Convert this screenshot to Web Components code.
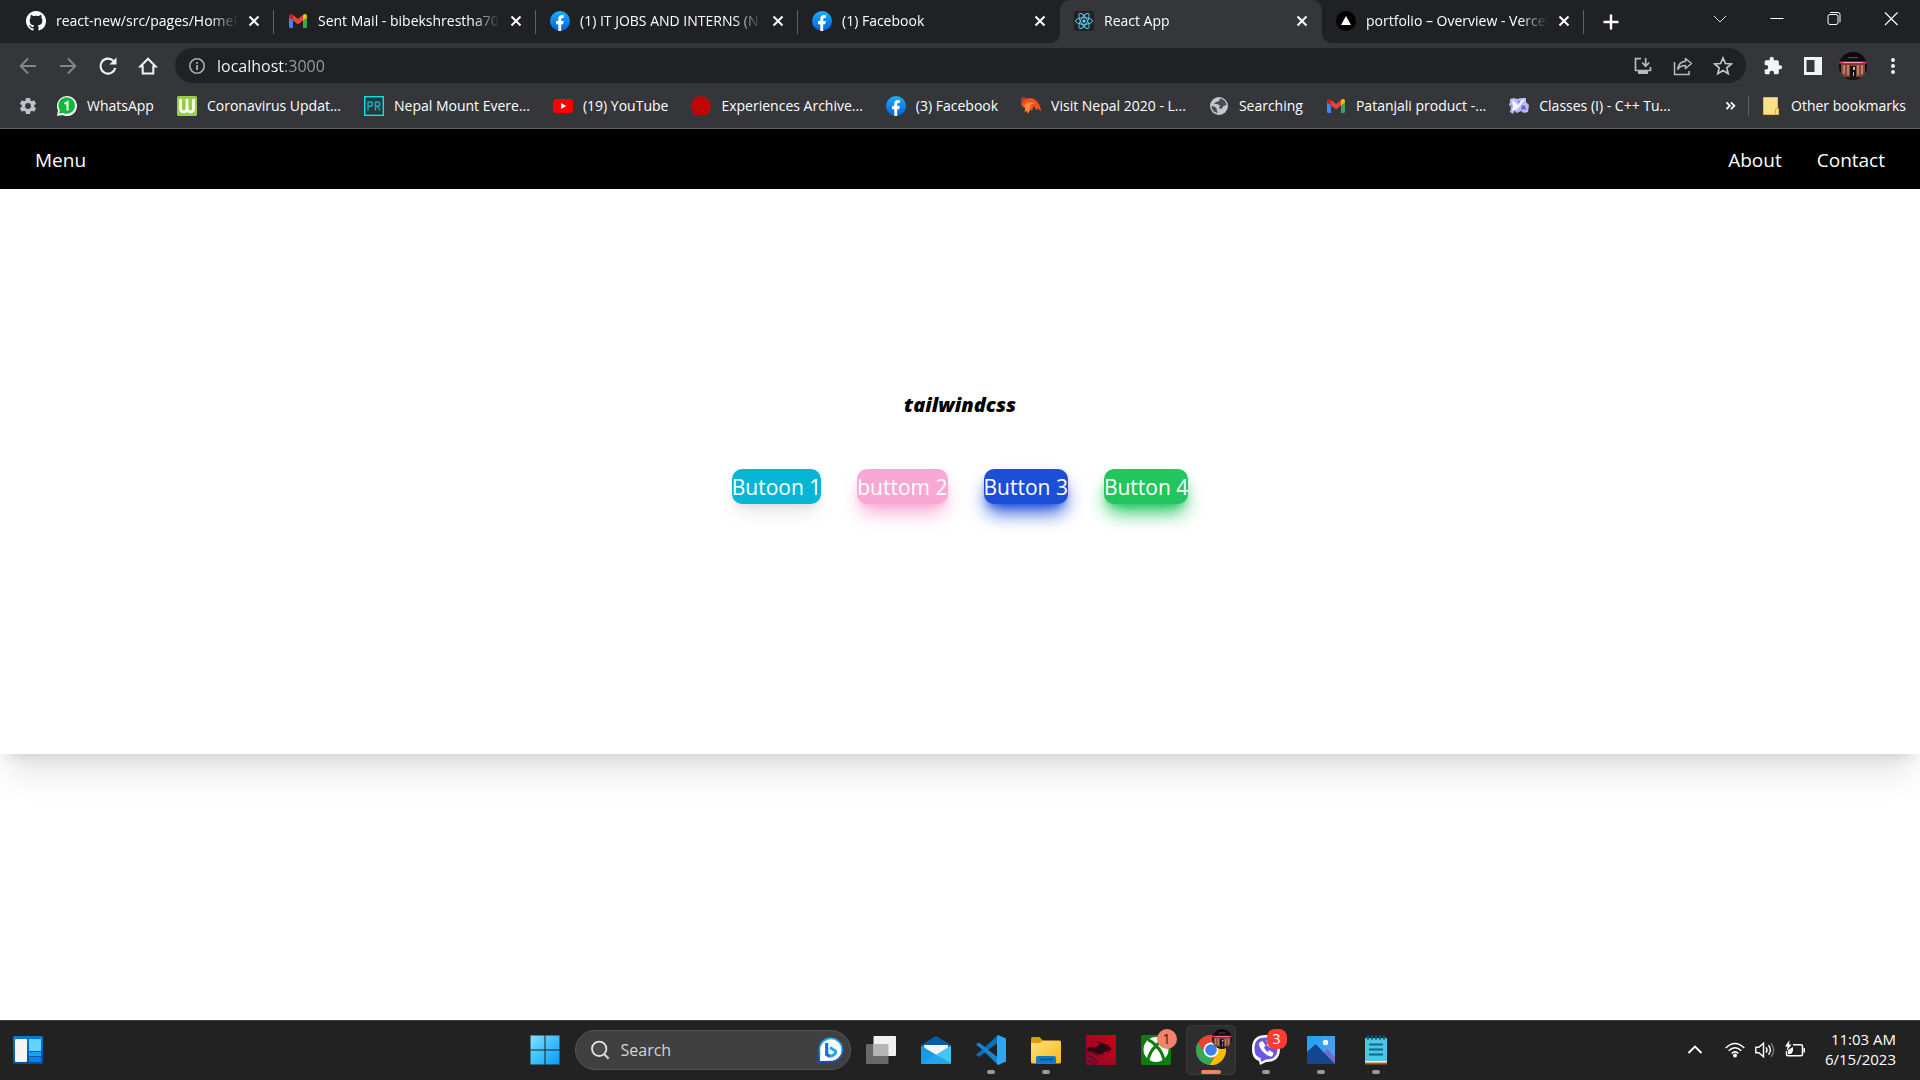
<!DOCTYPE html>
<html lang="en">
<head>
<meta charset="utf-8">
<title>React App</title>
<style>
  html, body { height: 100%; }
  body { margin: 0; font-family: "Open Sans", "Noto Sans", sans-serif; background: #fff; overflow: hidden; }
</style>
</head>
<body>
<desktop-screen></desktop-screen>
<script>
const ICONS = {
  github: ['0 0 16 16', '<path fill="#fff" d="M8 0C3.58 0 0 3.58 0 8c0 3.54 2.29 6.53 5.47 7.59.4.07.55-.17.55-.38 0-.19-.01-.82-.01-1.49-2.01.37-2.53-.49-2.69-.94-.09-.23-.48-.94-.82-1.13-.28-.15-.68-.52-.01-.53.63-.01 1.08.58 1.23.82.72 1.21 1.87.87 2.33.66.07-.52.28-.87.51-1.07-1.78-.2-3.64-.89-3.64-3.95 0-.87.31-1.59.82-2.15-.08-.2-.36-1.02.08-2.12 0 0 .67-.21 2.2.82.64-.18 1.32-.27 2-.27s1.36.09 2 .27c1.53-1.04 2.2-.82 2.2-.82.44 1.1.16 1.92.08 2.12.51.56.82 1.27.82 2.15 0 3.07-1.87 3.75-3.65 3.95.29.25.54.73.54 1.48 0 1.07-.01 1.93-.01 2.2 0 .21.15.46.55.38A8.01 8.01 0 0 0 16 8c0-4.42-3.58-8-8-8z"/>'],
  gmail: ['0 0 20 20', '<path fill="#4285f4" d="M1 6v9.500a1.500 1.500 0 0 0 1.500 1.500H5V9z"/><path fill="#34a853" d="M19 6v9.500a1.500 1.500 0 0 1-1.500 1.500H15V9z"/><path fill="#ea4335" d="M5 9.500V4l5 4 5-4v5.500l-5 4z"/><path fill="#c5221f" d="M1 5c0-2 2-2.600 3.300-1.600L5 4v5.500L1 6.500z"/><path fill="#fbbc04" d="M19 5c0-2-2-2.600-3.300-1.600L15 4v5.500l4-3z"/>'],
  facebook: ['0 0 20 20', '<defs><linearGradient id="f" x2="0" y2="1"><stop stop-color="#19afff"/><stop offset="1" stop-color="#0062e0"/></linearGradient></defs><circle cx="10" cy="10" r="10" fill="url(#f)"/><path fill="#fff" d="M8.300 20v-6.800H6V10h2.300V8c0-2.700 1.300-4 3.800-4 .7 0 1.300.1 1.700.2V7h-1.300c-1 0-1.300.5-1.300 1.300V10h2.500l-.5 3.200h-2V20z"/>'],
  react: ['0 0 20 20', '<rect width="20" height="20" rx="2" fill="#20232a"/><g fill="none" stroke="#61dafb" stroke-width=".9"><ellipse cx="10" cy="10" rx="8.500" ry="3.300"/><ellipse cx="10" cy="10" rx="8.500" ry="3.300" transform="rotate(60 10 10)"/><ellipse cx="10" cy="10" rx="8.500" ry="3.300" transform="rotate(120 10 10)"/></g><circle cx="10" cy="10" r="1.600" fill="#61dafb"/>'],
  vercel: ['0 0 20 20', '<circle cx="10" cy="10" r="10" fill="#000"/><path fill="#fff" d="M10 5l5 9H5z"/>'],
  close: ['0 0 20 20', '<path d="M5.500 5.500l9 9m0-9l-9 9" stroke="#fff" stroke-width="2"/>'],
  plus: ['0 0 20 20', '<path d="M10 2.500v15M2.500 10h15" stroke="#fff" stroke-width="2.400"/>'],
  caret: ['0 0 20 20', '<path d="M4 7l6 6 6-6" fill="none" stroke="#ddd" stroke-width="1"/>'],
  minimize: ['0 0 20 20', '<path d="M3.500 9.500h13" stroke="#fff" stroke-width="1"/>'],
  restore: ['0 0 20 20', '<rect x="4" y="5.500" width="10" height="10" rx="2" fill="none" stroke="#fff"/><path d="M6 3.500h8a2 2 0 0 1 2 2v8" fill="none" stroke="#fff"/>'],
  exit: ['0 0 20 20', '<path d="M4 3.500l12.500 12.500m0-12.500L4 16" stroke="#fff" stroke-width="1.100"/>'],
  back: ['0 0 20 20', '<path d="M18 10H3m7-7.500L2.700 10l7.300 7.500" fill="none" stroke="#85878a" stroke-width="1.800"/>'],
  forward: ['0 0 20 20', '<path d="M2 10h15M10 2.500l7.300 7.500-7.300 7.500" fill="none" stroke="#85878a" stroke-width="1.800"/>'],
  reload: ['0 0 20 20', '<path d="M15.500 5A7.500 7.500 0 1 0 17.300 12" fill="none" stroke="#f1f3f4" stroke-width="2.100"/><path d="M18.500 1.500v7h-7z" fill="#f1f3f4"/>'],
  home: ['0 0 20 20', '<path d="M2.300 10.500L10 2.700l7.700 7.800H15.300v7H4.700v-7z" fill="none" stroke="#f1f3f4" stroke-width="2"/>'],
  info: ['0 0 20 20', '<circle cx="10" cy="10" r="7.200" fill="none" stroke="#a8abaf" stroke-width="1.600"/><path d="M10 9v5M10 6v1.800" stroke="#a8abaf" stroke-width="1.800"/>'],
  install: ['0 0 20 20', '<path d="M8 2.700H2.500v11.800h15V11" fill="none" stroke="#b8babd" stroke-width="1.700"/><path d="M12.700 2v8m-3.500-3.500l3.500 3.700 3.600-3.700" stroke="#b8babd" stroke-width="1.700" fill="none"/><path fill="#b8babd" d="M5 15h10v3H5z"/>'],
  share: ['0 0 20 20', '<path d="M1.500 6v12.500H16V15" fill="none" stroke="#b8babd" stroke-width="1.500"/><path d="M12.500 2.500l6 5-6 5V9.500c-3.500 0-6 1-7.700 3.800.3-4 3-7.500 7.700-8z" fill="none" stroke="#b8babd" stroke-width="1.500" stroke-linejoin="round"/>'],
  star: ['0 0 20 20', '<path d="M10 2l2.400 5.500 5.900.5-4.500 3.900 1.400 5.800L10 14.600l-5.200 3.100 1.400-5.800L1.700 8l5.900-.5z" fill="none" stroke="#c2c4c7" stroke-width="1.700"/>'],
  puzzle: ['0 0 24 24', '<path fill="#f1f3f4" d="M20.500 11H19V7a2 2 0 0 0-2-2h-4V3.500a2.500 2.500 0 0 0-5 0V5H4a2 2 0 0 0-2 2v3.800h1.500a2.700 2.700 0 0 1 0 5.400H2V20a2 2 0 0 0 2 2h3.800v-1.500a2.700 2.700 0 0 1 5.400 0V22H17a2 2 0 0 0 2-2v-4h1.500a2.500 2.500 0 0 0 0-5z"/>'],
  panel: ['0 0 20 20', '<path fill="#f1f3f4" fill-rule="evenodd" d="M1 1h18v18H1zM3.500 4v12h8V4z"/>'],
  dots: ['0 0 20 20', '<g fill="#f1f3f4"><circle cx="10" cy="4" r="2"/><circle cx="10" cy="10" r="2"/><circle cx="10" cy="16" r="2"/></g>'],
  avatar: ['0 0 28 28', '<defs><clipPath id="c"><circle cx="14" cy="14" r="14"/></clipPath></defs><g clip-path="url(#c)"><path fill="#0c0a12" d="M0 0h28v28H0z"/><path fill="#7c4a38" d="M2 12h24v14H2z"/><path fill="#b9806a" d="M4 13h2v9H4zM8 13h2v10H8zM18 13h2v10h-2zM22 13h2v9h-2z"/><path fill="#14100f" d="M11 14h6v11h-6z"/><path fill="#b8bcc0" d="M14 15h2v3h-2zM14 20h1v4h-1z"/><path fill="#a0142e" d="M2 11h24v1.500H2z"/><path fill="#f0285c" d="M0 9.500h28v2H0z"/><path fill="#ffc0d0" d="M4 10h20v.8H4z"/><path fill="#63423c" d="M9 5h10v1.200H9z"/><path fill="#201512" d="M0 25h28v3H0z"/></g>'],
  gear: ['0 0 24 24', '<path fill="#bdc1c6" fill-rule="evenodd" d="M19.400 13a7.500 7.500 0 0 0 0-2l2.300-1.800-2.300-4-2.700 1.100a8 8 0 0 0-1.800-1L14.500 2.500h-5L9.100 5.300a8 8 0 0 0-1.800 1L4.600 5.200l-2.300 4L4.600 11a7.500 7.500 0 0 0 0 2l-2.300 1.800 2.300 4 2.700-1.100c.6.400 1.200.8 1.800 1l.4 2.800h5l.4-2.800c.6-.2 1.200-.6 1.800-1l2.700 1.100 2.300-4zM12 15.500a3.500 3.500 0 1 1 0-7 3.500 3.500 0 0 1 0 7z"/>'],
  whatsapp: ['0 0 20 20', '<path fill="#fff" d="M0 20l1-5.500A10 10 0 1 1 5.500 19z"/><path fill="#12b83c" d="M2 17.800l.8-3.600A8.300 8.300 0 1 1 6 17z"/><path d="M7.500 7.800L10.500 6v8.500" fill="none" stroke="#fff" stroke-width="2"/>'],
  worldometer: ['0 0 20 20', '<rect width="20" height="20" rx="1.500" fill="#99cf45"/><path d="M3.500 3v9.500q0 3.300 3.200 3.300t3.300-3.300V3v9.500q0 3.300 3.300 3.300t3.200-3.300V3" fill="none" stroke="#fff" stroke-width="2.700"/>'],
  pr: ['0 0 20 20', '<rect x=".7" y=".7" width="18.600" height="18.600" fill="#26383c" stroke="#00e5e8" stroke-width="1.400"/><path d="M4 14.500V6H6.500a2 2 0 0 1 0 4.200H4M11.500 14.500V6h2.200a2 2 0 0 1 0 4.200h-2.200m2.200 0l2.300 4.300" fill="none" stroke="#12b8bd" stroke-width="1.400"/>'],
  youtube: ['0 0 20 20', '<rect y="3" width="20" height="14" rx="3.500" fill="#f00"/><path fill="#fff" d="M8 7l5.200 3L8 13z"/>'],
  blob: ['0 0 20 20', '<path fill="#c00508" d="M5 1.500C8-.5 13-.3 16 2.500s4 6 3.500 9.500c-.3 3-1 4-2 5.500l-.5 2-2-1-1.500 1.200-2-1-2 1-1.800-.8L6 19.800l-1.500-1L2 19l.3-2.500C.5 14 0 11 .5 8s2-5 4.500-6.500z"/>'],
  bird: ['0 0 20 20', '<path fill="#f0541c" d="M0 8C2 3.500 7 1.500 11 2.500c5 1 8.500 6 9 13l-3-3-1.500 1.500-3-4-1.500 5-1.500-2-2.500 5-1.500-3-2 2 .5-5-2-1z"/><path fill="#c23a1a" d="M0 1l1.500 1L3 .5l1 1.500 2-1-3 4-3 3z"/><path fill="#ff8a2c" d="M2.500 10c3-4 8-5 12-2-3-.5-5 .5-5 2l-.5 4-2 3-1.500-3-1.500 1v-4z"/>'],
  globe: ['0 0 20 20', '<circle cx="10" cy="10" r="9" fill="#c3c6ca"/><path fill="#4a4d51" d="M11 2.500c3.500.4 6 3 6.500 6.500l-3 1-2 3-2.500-1 1-2.500-3-1.500H5l2-2 3-1zM2.500 10l3 .5 2 2 1 4.500c-3.500-.7-6-3.500-6-7z"/>'],
  classes: ['0 0 20 20', '<path fill="#b9b9f2" d="M1 3l4-1 3 1 4-1 5 0v4l3 3-1 7-4 1-3-2-4 2-3-2-1 3-3-2 1-4-2-3 1-3z"/><path fill="#f4f4ff" d="M3 4l3 2 3 3 4-5 3-1-4 6-5 5-4 1 1-4z"/><path fill="#6464c8" d="M9 4l2 2-2 1zM1 9l3 1-3 1zM13 9l3 1 1 4-3-1-2 2zM5 14l2 1-2 2z"/>'],
  more: ['0 0 20 20', '<path d="M6.500 6.300l3.300 3.400-3.300 3.400m4.500-6.800l3.300 3.400-3.300 3.400" fill="none" stroke="#fff" stroke-width="1.800"/>'],
  folder: ['0 0 20 20', '<path fill="#ffe08a" stroke="#e8bb45" d="M2.500 1.500h14v11h1v6h-15z"/><path d="M14.500 18v-4.500q0-1 2-1" stroke="#dba92f" fill="none"/>'],
  widgets: ['0 0 30 30', '<defs><linearGradient id="w" x2="0" y2="1"><stop stop-color="#0a7ad4"/><stop offset="1" stop-color="#0b4b94"/></linearGradient></defs><rect y="1" width="30" height="28" rx="1.500" fill="url(#w)"/><rect x="2" y="4" width="12" height="23" rx="1" fill="#f4f4f4"/><path fill="#62d4ff" d="M16 4h12v12H16z"/><path fill="#17a2fb" d="M16 17h12v4H16z"/><path fill="#0583ec" d="M16 22h12v5H16z"/>'],
  windows: ['0 0 30 30', '<defs><linearGradient id="s" gradientUnits="userSpaceOnUse" x1="0" y1="0" x2="30" y2="30"><stop stop-color="#8be0ff"/><stop offset=".5" stop-color="#3cc1fb"/><stop offset="1" stop-color="#0798fb"/></linearGradient></defs><path fill="url(#s)" d="M.5.5h14v14H.5zM15.500.5h14v14h-14zM.5 15.500h14v14H.5zM15.500 15.500h14v14h-14z"/>'],
  search: ['0 0 20 20', '<circle cx="9.200" cy="8.800" r="7.200" fill="#4a4a4a" stroke="#e4e4e4" stroke-width="1.800"/><path d="M14 14l4.600 4.600" stroke="#d0d0d0" stroke-width="2.200"/>'],
  bing: ['0 0 26 26', '<defs><linearGradient id="b" x2="0" y2="1"><stop stop-color="#22b5f5"/><stop offset="1" stop-color="#1348c8"/></linearGradient></defs><path fill="url(#b)" d="M1 26l.5-11A12.500 12.500 0 1 1 14 25.500z"/><path fill="#fff" d="M3 24l.3-9A10.700 10.700 0 1 1 14 23.700z"/><path d="M9.700 6v11.500l3.500 2" fill="none" stroke="#1a6bf0" stroke-width="3.200"/><path d="M13 10.500l5.500 3.500q1.500 3-5.300 5.500" fill="none" stroke="#1fa9e8" stroke-width="3"/>'],
  taskview: ['0 0 30 30', '<rect y="9" width="22.500" height="20" rx="1" fill="#696969"/><rect x="7.500" y="1" width="22.500" height="20" rx="1" fill="#f1f1f1"/><path fill="#b5b5b5" d="M7.500 9h15v12h-15z"/>'],
  mail: ['0 0 30 30', '<path fill="#0a5cab" d="M0 10L15 1l15 9v4H0z"/><path fill="#f6f6f6" d="M3 10h24v8l-12 5L3 17z"/><path fill="#1a9be8" d="M0 10.500L30 29H0z"/><path fill="#3fc6f4" d="M30 10.500L15 19.800 30 29z"/><path fill="#22a6ea" d="M15 19.800L30 29H0z"/>'],
  vscode: ['0 0 30 30', '<path fill="#0a6db8" d="M22 0L5.500 15 0 19.500 3 22l19-14z"/><path fill="#1583cf" d="M22 30L5.500 14 0 9.500 3 7.500 22 22z"/><path fill="#2ba8f1" d="M22 0l8 3.500v23L22 30q-.8-.3-1-1.500v-27Q21.300.3 22 0z"/><path fill="#222" d="M21 8.500v13L12.500 15z"/>'],
  explorer: ['0 0 30 30', '<defs><linearGradient id="e" x2="1" y2="1"><stop stop-color="#ffe27a"/><stop offset="1" stop-color="#f7b916"/></linearGradient></defs><path fill="#dd9b0a" d="M0 3.500Q0 2 1.500 2h7l3.500 3.500v6H0z"/><path fill="url(#e)" d="M0 8h9l3-2.500h16.500Q30 5.500 30 7v20q0 1.500-1.500 1.500h-27Q0 28.500 0 27z"/><path fill="#1279c9" d="M5 28.500V23q0-2 2-2h16q2 0 2 2v5.500z"/><path d="M9 24.500h13" stroke="#0a4d87" stroke-width="1.500"/>'],
  dragon: ['0 0 30 30', '<defs><linearGradient id="d" x1="1" y1="0" x2="0" y2="1"><stop stop-color="#cf0012"/><stop offset=".6" stop-color="#a50722"/><stop offset="1" stop-color="#7d0c37"/></linearGradient></defs><path fill="url(#d)" d="M0 0h30v30H0z"/><path fill="#2a0a14" d="M1 13q5-1 9-.5l4-3.500-4-1.500q5-1 8 1.500l4 1 3.500 4-1 1.500-3-1 2 2.500-4-.5-3 1.500 2 1-5 .5-3-1.500q-5-2-9.500-3z"/><path d="M0 17q8-1 12 4M0 21q7-1 12 7M2 26q5 0 7 4" stroke="#4a0d22" stroke-width="1.200" fill="none"/>'],
  xbox: ['0 0 30 30', '<rect width="30" height="30" rx="2" fill="#107c10"/><circle cx="15" cy="14.500" r="12.500" fill="#fff"/><path fill="none" stroke="#107c10" stroke-width="3" d="M7 25Q9 16 15 11q6 5 8 14M7 5q4 1 8 6 4-5 8-6"/>'],
  chrome: ['0 0 30 30', '<circle cx="15" cy="15" r="15" fill="#ea4335"/><path fill="#fbbc04" d="M15 8h13.200A15 15 0 0 1 13.500 30l7.500-12z"/><path fill="#34a853" d="M2 7.500l7 11.500 6 3.500h3L13.500 30A15 15 0 0 1 2 7.500z"/><circle cx="15" cy="15" r="7.500" fill="#fff"/><circle cx="15" cy="15" r="5.800" fill="#3b82f0"/>'],
  viber: ['0 0 30 30', '<path fill="#fff" d="M15 0c9 0 14 4 14 13.500S24 27 15 27l-6 3-1-4C3 24.500 1 20 1 13.500 1 4 6 0 15 0z"/><path fill="#6d57e0" d="M15 2.500c7.500 0 11.500 3 11.500 11S22.500 24.500 15 24.500L10 27l-.3-4C5.500 22 3.500 19 3.500 13.500c0-8 4-11 11.500-11z"/><path fill="#fff" d="M9 7l2.500-1 3 4.500-1.500 2q1 3 4 4.500l1.500-2 4 3-1 3q-2 1.500-6-1.200Q9 15 8 10q-.3-2 1-3z"/><path d="M15.500 6q6 .5 6.500 6.500m-6-3q2.500.3 3 3" stroke="#fff" stroke-width="1.300" fill="none"/>'],
  photos: ['0 0 30 30', '<defs><linearGradient id="p" x2="1" y2="1"><stop stop-color="#16a5f2"/><stop offset="1" stop-color="#6a9aef"/></linearGradient></defs><path fill="url(#p)" d="M1 1h28v28H1z"/><path fill="#6d6fd0" d="M14 22l7-8 8 8v7H17z"/><path fill="#13468f" d="M1 17l7.500-7q1-1 2 0L29 29H1z"/><circle cx="19.500" cy="7.500" r="2.700" fill="#fff"/>'],
  notepad: ['0 0 30 30', '<path fill="#b65a16" d="M4 26h22v3.500H4z"/><path fill="#f1f1f1" d="M4 24h22v3.500H4z"/><path fill="#4cc6e3" d="M4 3h22v23H4z"/><path d="M7 .5v4M11 .5v4M15 .5v4M19 .5v4M23 .5v4" stroke="#0d5a78" stroke-width="2.200"/><path d="M8 9.500h14M8 14.500h14M8 19.500h14" stroke="#0b6a8c" stroke-width="2"/>'],
  up: ['0 0 20 20', '<path d="M3.500 13l6.500-6.500 6.500 6.500" fill="none" stroke="#fff" stroke-width="1.900"/>'],
  wifi: ['0 0 20 20', '<g fill="none" stroke="#fff" stroke-width="1.500"><path d="M.7 8Q10-1 19.300 8"/><path d="M3.700 10.800Q10 4.800 16.300 10.800"/><path d="M6.600 13.500Q10 10.300 13.400 13.500"/></g><circle cx="10" cy="15.500" r="2" fill="#fff"/>'],
  volume: ['0 0 20 20', '<g fill="none" stroke="#fff" stroke-width="1.400"><path d="M.8 7.200h3L8.500 3.300v13.400L3.800 12.800h-3z"/><path d="M11 7.300q2 2.700 0 5.400M13.500 5.300q3.700 4.700 0 9.400"/><path stroke="#777" d="M16 3.300q5.300 6.700 0 13.400"/></g>'],
  battery: ['0 0 20 20', '<path d="M8 4.700h8q1.500 0 1.500 1.500v8q0 1.500-1.500 1.500H3q-1.500 0-1.500-1.500v-3" fill="none" stroke="#fff" stroke-width="1.500"/><path fill="#fff" d="M18.500 8H20v4.500h-1.500zM4.500 0L0 6.500h2.500L1.500 11l5-6.500H4zM3 14V10l5-3v4l-2 3z"/>']
};

const define = (name, html, setup) => {
  const template = document.createElement('template');
  template.innerHTML = html;
  customElements.define(name, class extends HTMLElement {
    constructor() {
      super();
      this.attachShadow({ mode: 'open' }).append(template.content.cloneNode(true));
    }
    connectedCallback() { if (setup) setup(this, this.shadowRoot); }
  });
};

define('ui-icon', `<style>
  :host { display: block; flex: none; width: var(--size, 20px); height: var(--size, 20px); }
  svg { display: block; width: 100%; height: 100%; }
</style>`, (host, root) => {
  if (root.querySelector('svg')) return;
  const [box, body] = ICONS[host.getAttribute('name')];
  root.innerHTML += `<svg viewBox="${box}" aria-hidden="true">${body}</svg>`;
});

define('icon-button', `<style>
  :host { display: flex; flex: none; width: 40px; }
  button { flex: 1; display: flex; align-items: center; justify-content: center; padding: 0; border: 0; background: none; }
</style><button><slot></slot></button>`, (host, root) => {
  root.querySelector('button').setAttribute('aria-label', host.getAttribute('label'));
});

define('browser-tab', `<style>
  :host { display: flex; flex: 0 1 262px; min-width: 0; position: relative; align-items: center; box-sizing: border-box; padding: 0 10px 2px 14px; height: 43px; }
  :host([divider])::after { content: ""; position: absolute; right: 0; top: 10px; bottom: 9px; width: 1px; background: #5f6368; }
  :host([active]) { background: #35363a; border-radius: 10px 10px 0 0; }
  :host([active])::before, :host([active])::after { content: ""; position: absolute; bottom: 0; width: 10px; height: 10px; }
  :host([active])::before { right: 100%; background: radial-gradient(circle at 0 0, transparent 10px, #35363a 10px); }
  :host([active])::after { left: 100%; background: radial-gradient(circle at 100% 0, transparent 10px, #35363a 10px); }
  .select { flex: 1; min-width: 0; display: flex; align-items: center; gap: 10px; padding: 0; border: 0; background: none; color: #fff; font: 14px/20px "Open Sans", sans-serif; text-align: left; }
  .title { flex: 1; overflow: hidden; white-space: nowrap; -webkit-mask-image: linear-gradient(to left, transparent, #000 28px); }
  icon-button { width: 20px; margin-left: 6px; }
</style><button class="select" role="tab"><slot name="icon"></slot><span class="title"><slot></slot></span></button>
<icon-button label="Close tab"><ui-icon name="close"></ui-icon></icon-button>`);

define('tab-strip', `<style>
  :host { display: flex; background: #202124; height: 43px; padding: 0 1px 0 12px; }
  .new { width: 28px; margin-left: 13px; }
  .controls { display: flex; margin-left: auto; height: 37px; }
  .controls icon-button { width: 57px; }
</style><slot></slot>
<icon-button class="new" label="New tab"><ui-icon name="plus"></ui-icon></icon-button>
<div class="controls">
  <icon-button label="Search tabs"><ui-icon name="caret"></ui-icon></icon-button>
  <icon-button label="Minimize"><ui-icon name="minimize"></ui-icon></icon-button>
  <icon-button label="Restore"><ui-icon name="restore"></ui-icon></icon-button>
  <icon-button label="Close"><ui-icon name="exit"></ui-icon></icon-button>
</div>`);

define('tool-bar', `<style>
  :host { display: flex; background: #35363a; padding: 5px 7px 5px 8px; height: 35px; }
  form { flex: 1; display: flex; align-items: center; margin: 0 7px; padding: 0 3px 0 12px; border-radius: 18px; background: #202124; }
  input { flex: 1; min-width: 0; margin-left: 10px; padding: 0; border: 0; outline: 0; font: 16px/24px "Open Sans", sans-serif; color: #fff;
    background: linear-gradient(to right, #fff 68px, #9aa0a6 68px); -webkit-background-clip: text; background-clip: text; -webkit-text-fill-color: transparent; }
  .avatar { --size: 28px; }
</style>
<icon-button label="Back"><ui-icon name="back"></ui-icon></icon-button>
<icon-button label="Forward"><ui-icon name="forward"></ui-icon></icon-button>
<icon-button label="Reload"><ui-icon name="reload"></ui-icon></icon-button>
<icon-button label="Home"><ui-icon name="home"></ui-icon></icon-button>
<form><ui-icon name="info"></ui-icon><input aria-label="Address" value="localhost:3000">
  <icon-button label="Install"><ui-icon name="install"></ui-icon></icon-button>
  <icon-button label="Share"><ui-icon name="share"></ui-icon></icon-button>
  <icon-button label="Bookmark"><ui-icon name="star"></ui-icon></icon-button></form>
<icon-button label="Extensions"><ui-icon name="puzzle"></ui-icon></icon-button>
<icon-button label="Side panel"><ui-icon name="panel"></ui-icon></icon-button>
<icon-button label="Profile"><ui-icon class="avatar" name="avatar"></ui-icon></icon-button>
<icon-button label="Customize"><ui-icon name="dots"></ui-icon></icon-button>`);

define('book-mark', `<style>
  :host { display: block; flex: none; }
  a { display: flex; align-items: center; gap: 10px; color: #fff; font-size: 14px; line-height: 20px; text-decoration: none; white-space: nowrap; }
</style><a href="#"><slot></slot></a>`, (host, root) => {
  const icon = document.createElement('ui-icon');
  icon.setAttribute('name', host.getAttribute('icon'));
  root.querySelector('a').prepend(icon);
});

define('bookmarks-bar', `<style>
  :host { display: flex; align-items: center; box-sizing: border-box; height: 41px; padding: 0 14px 4px 18px; background: #35363a; border-bottom: 1px solid #5f6063; }
  .list { flex: 1; min-width: 0; display: flex; gap: 23px; margin-left: 19px; }
  icon-button { width: 20px; }
  .rule { width: 1px; height: 20px; margin: 0 12px 0 8px; background: #5f6368; }
</style>
<icon-button label="Settings"><ui-icon name="gear"></ui-icon></icon-button>
<div class="list"><slot></slot></div>
<icon-button label="More bookmarks"><ui-icon name="more"></ui-icon></icon-button>
<span class="rule"></span><book-mark icon="folder">Other bookmarks</book-mark>`);

define('site-nav', `<style>
  nav { display: flex; gap: 35px; padding: 16px 35px 14px; background: #000; font-size: 19px; line-height: 30px; }
  a { color: #fff; text-decoration: none; }
  a:first-child { margin-right: auto; }
</style><nav><a href="#">Menu</a><a href="#">About</a><a href="#">Contact</a></nav>`);

define('glow-button', `<style>
  :host { display: block; }
  button { display: block; padding: 1px 0 0; border: 0; border-radius: 10px; background: var(--fill); color: #fff; font: 21px/34px "Open Sans", sans-serif; box-shadow: 0 12px 19px -4px var(--glow), 0 5px 8px -5px var(--glow); }
</style><button><slot></slot></button>`);

define('home-page', `<style>
  :host { display: block; flex: 1; overflow: hidden; background: #fff; }
  section { padding: 198px 0 250px; background: #fff; box-shadow: 0 25px 31px -6px rgba(0, 0, 0, .1), 0 10px 12px -7px rgba(0, 0, 0, .1); text-align: center; }
  h1 { margin: 0 0 47px; font: italic 800 20px/35px "Open Sans", sans-serif; color: #000; }
  .row { display: flex; justify-content: center; gap: 36px; }
  .cyan { --fill: #06b6d4; --glow: rgba(0, 0, 0, .1); }
  .pink { --fill: #f9a8d4; --glow: #f9a8d4; }
  .blue { --fill: #1d4ed8; --glow: #1d4ed8; }
  .green { --fill: #22c55e; --glow: #22c55e; }
</style><site-nav></site-nav>
<section><h1>tailwindcss</h1>
<div class="row"><glow-button class="cyan">Butoon 1</glow-button><glow-button class="pink">buttom 2</glow-button><glow-button class="blue">Button 3</glow-button><glow-button class="green">Button 4</glow-button></div></section>`);

define('task-item', `<style>
  :host { display: block; position: relative; width: 50px; height: 50px; box-sizing: border-box; }
  button { display: flex; align-items: center; justify-content: center; width: 100%; height: 100%; padding: 0; border: 0; border-radius: 6px; background: none; }
  ui-icon { --size: 30px; }
  :host([open])::after { content: ""; position: absolute; left: 21px; bottom: 1px; width: 8px; height: 4px; border-radius: 2px; background: #9a9a9a; }
  :host([current]) button { background: #2e2e2e; box-shadow: inset 0 0 0 1px #3a3a3a; }
  :host([current])::after { left: 15px; width: 20px; background: #f3826a; }
  ::slotted(*) { position: absolute; top: 4px; right: 4px; }
</style><button></button><slot></slot>`, (host, root) => {
  const b = root.querySelector('button');
  b.setAttribute('aria-label', host.getAttribute('icon'));
  b.innerHTML = `<ui-icon name="${host.getAttribute('icon')}"></ui-icon>`;
});

define('task-bar', `<style>
  :host { display: grid; grid-template-columns: 1fr auto 1fr; align-items: center; height: 57px; padding-bottom: 2px; border-top: 1px solid #3f3f3f; background: #222; color: #fff; }
  .left { padding-left: 3px; }
  .apps { display: flex; align-items: center; gap: 5px; }
  label { display: flex; align-items: center; box-sizing: border-box; width: 276px; height: 40px; padding: 0 7px 0 14px; border: 1px solid #555; border-radius: 20px; background: #404040; }
  input { flex: 1; min-width: 0; margin-left: 11px; padding: 0; border: 0; outline: 0; background: none; font: 16px/24px "Open Sans", sans-serif; }
  input::placeholder { color: #d4d4d4; opacity: 1; }
  .bing { --size: 26px; }
  .badge { box-sizing: border-box; width: 20px; height: 20px; border-radius: 10px; background: #f3826a; color: #222; font-size: 14px; line-height: 20px; text-align: center; }
  .badge.red { background: #fc3b33; color: #fff; border-radius: 8px; }
  .face { --size: 20px; }
  .tray { display: flex; justify-content: flex-end; align-items: center; gap: 10px; padding-right: 24px; }
  .up { margin-right: 10px; }
  time { margin-left: 10px; padding-bottom: 2px; font-size: 15px; line-height: 20px; text-align: right; }
</style>
<div class="left"><task-item icon="widgets"></task-item></div>
<div class="apps">
  <task-item icon="windows"></task-item>
  <label><ui-icon name="search"></ui-icon><input type="text" aria-label="Search" placeholder="Search"><ui-icon class="bing" name="bing"></ui-icon></label>
  <task-item icon="taskview"></task-item><task-item icon="mail"></task-item><task-item icon="vscode" open></task-item>
  <task-item icon="explorer" open></task-item><task-item icon="dragon"></task-item>
  <task-item icon="xbox"><span class="badge">1</span></task-item>
  <task-item icon="chrome" open current><ui-icon class="face" name="avatar"></ui-icon></task-item>
  <task-item icon="viber" open><span class="badge red">3</span></task-item>
  <task-item icon="photos" open></task-item><task-item icon="notepad" open></task-item>
</div>
<div class="tray"><ui-icon class="up" name="up"></ui-icon><ui-icon name="wifi"></ui-icon><ui-icon name="volume"></ui-icon><ui-icon name="battery"></ui-icon><time>11:03 AM<br>6/15/2023</time></div>`);

define('desktop-screen', `<style>
  :host { display: flex; flex-direction: column; height: 100vh; }
</style>
<tab-strip>
  <browser-tab divider><ui-icon slot="icon" name="github"></ui-icon>react-new/src/pages/HomePage</browser-tab>
  <browser-tab divider><ui-icon slot="icon" name="gmail"></ui-icon>Sent Mail - bibekshrestha70</browser-tab>
  <browser-tab divider><ui-icon slot="icon" name="facebook"></ui-icon>(1) IT JOBS AND INTERNS (N</browser-tab>
  <browser-tab><ui-icon slot="icon" name="facebook"></ui-icon>(1) Facebook</browser-tab>
  <browser-tab active><ui-icon slot="icon" name="react"></ui-icon>React App</browser-tab>
  <browser-tab divider><ui-icon slot="icon" name="vercel"></ui-icon>portfolio – Overview - Vercel</browser-tab>
</tab-strip>
<tool-bar></tool-bar>
<bookmarks-bar>
  <book-mark icon="whatsapp">WhatsApp</book-mark>
  <book-mark icon="worldometer">Coronavirus Updat...</book-mark>
  <book-mark icon="pr">Nepal Mount Evere...</book-mark>
  <book-mark icon="youtube">(19) YouTube</book-mark>
  <book-mark icon="blob">Experiences Archive...</book-mark>
  <book-mark icon="facebook">(3) Facebook</book-mark>
  <book-mark icon="bird">Visit Nepal 2020 - L...</book-mark>
  <book-mark icon="globe">Searching</book-mark>
  <book-mark icon="gmail">Patanjali product -...</book-mark>
  <book-mark icon="classes">Classes (I) - C++ Tu...</book-mark>
</bookmarks-bar>
<home-page></home-page>
<task-bar></task-bar>`);
</script>
</body>
</html>
